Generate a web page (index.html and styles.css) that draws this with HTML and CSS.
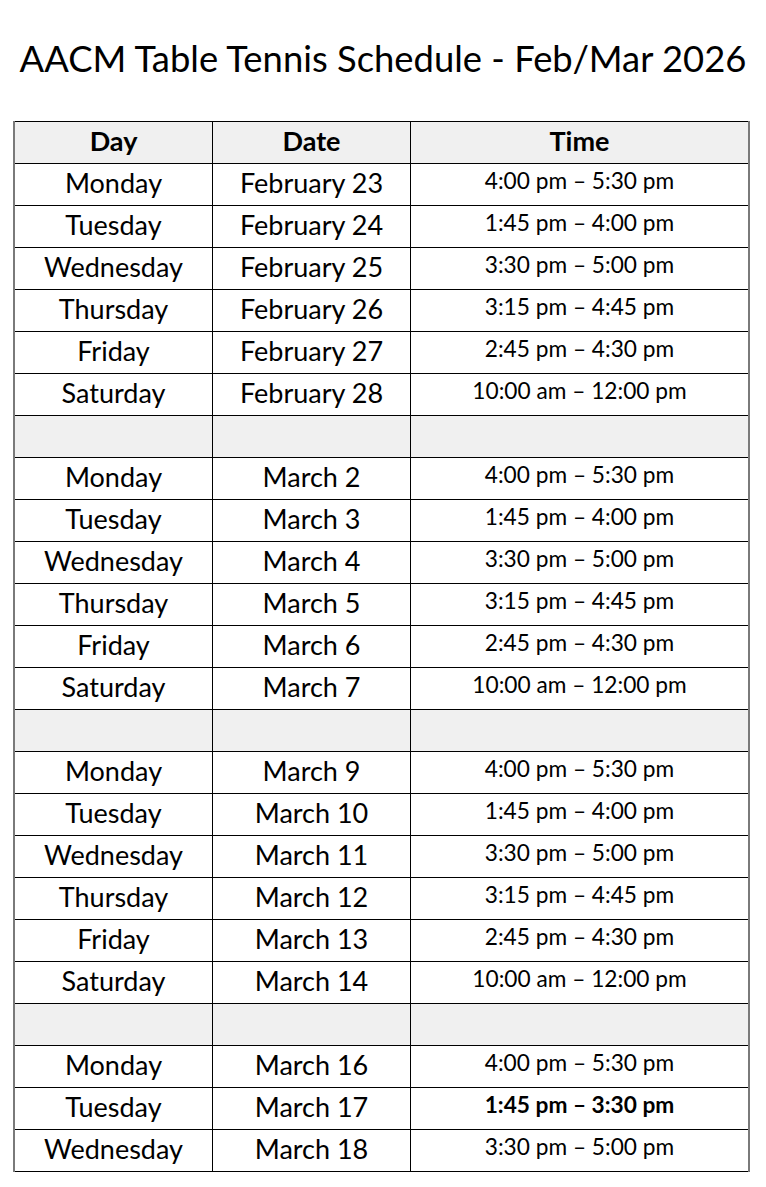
FILE: index.html
```html
<!DOCTYPE html>
<html>
<head>
<meta charset="utf-8">
<link rel="stylesheet" href="styles.css">
</head>
<body>
<h1 class="title">AACM Table Tennis Schedule - Feb/Mar 2026</h1>
<table class="sched">
<thead>
<tr><th class="c-day">Day</th><th class="c-date">Date</th><th class="c-time">Time</th></tr>
</thead>
<tbody>
<tr><td>Monday</td><td>February 23</td><td class="t">4:00 pm – 5:30 pm</td></tr>
<tr><td>Tuesday</td><td>February 24</td><td class="t">1:45 pm – 4:00 pm</td></tr>
<tr><td>Wednesday</td><td>February 25</td><td class="t">3:30 pm – 5:00 pm</td></tr>
<tr><td>Thursday</td><td>February 26</td><td class="t">3:15 pm – 4:45 pm</td></tr>
<tr><td>Friday</td><td>February 27</td><td class="t">2:45 pm – 4:30 pm</td></tr>
<tr><td>Saturday</td><td>February 28</td><td class="t">10:00 am – 12:00 pm</td></tr>
<tr class="gap"><td></td><td></td><td></td></tr>
<tr><td>Monday</td><td>March 2</td><td class="t">4:00 pm – 5:30 pm</td></tr>
<tr><td>Tuesday</td><td>March 3</td><td class="t">1:45 pm – 4:00 pm</td></tr>
<tr><td>Wednesday</td><td>March 4</td><td class="t">3:30 pm – 5:00 pm</td></tr>
<tr><td>Thursday</td><td>March 5</td><td class="t">3:15 pm – 4:45 pm</td></tr>
<tr><td>Friday</td><td>March 6</td><td class="t">2:45 pm – 4:30 pm</td></tr>
<tr><td>Saturday</td><td>March 7</td><td class="t">10:00 am – 12:00 pm</td></tr>
<tr class="gap"><td></td><td></td><td></td></tr>
<tr><td>Monday</td><td>March 9</td><td class="t">4:00 pm – 5:30 pm</td></tr>
<tr><td>Tuesday</td><td>March 10</td><td class="t">1:45 pm – 4:00 pm</td></tr>
<tr><td>Wednesday</td><td>March 11</td><td class="t">3:30 pm – 5:00 pm</td></tr>
<tr><td>Thursday</td><td>March 12</td><td class="t">3:15 pm – 4:45 pm</td></tr>
<tr><td>Friday</td><td>March 13</td><td class="t">2:45 pm – 4:30 pm</td></tr>
<tr><td>Saturday</td><td>March 14</td><td class="t">10:00 am – 12:00 pm</td></tr>
<tr class="gap"><td></td><td></td><td></td></tr>
<tr><td>Monday</td><td>March 16</td><td class="t">4:00 pm – 5:30 pm</td></tr>
<tr><td>Tuesday</td><td>March 17</td><td class="t b">1:45 pm – 3:30 pm</td></tr>
<tr><td>Wednesday</td><td>March 18</td><td class="t">3:30 pm – 5:00 pm</td></tr>
</tbody>
</table>
</body>
</html>
```
FILE: styles.css
```css
html, body {
  margin: 0;
  padding: 0;
  background: #ffffff;
}
body {
  font-family: "Lato", "Open Sans", sans-serif;
  color: #000;
}
.title {
  margin: 0;
  height: 121px;
  box-sizing: border-box;
  padding-top: 35px;
  font-weight: 400;
  font-size: 36.4px;
  line-height: 46px;
  text-align: center;
  white-space: nowrap;
}
.sched {
  margin-left: 13px;
  width: 737px;
  border-collapse: collapse;
  table-layout: fixed;
}
.c-day { width: 197px; }
.c-date { width: 197px; }
.sched th,
.sched td {
  border: 1px solid #000;
  height: 38px;
  padding: 0 0 3px;
  text-align: center;
  vertical-align: middle;
  font-size: 27px;
  line-height: 30px;
  white-space: nowrap;
}
.sched th { height: 37px; padding-bottom: 4px; }
.sched th:first-child, .sched td:first-child { border-left: 2px solid #7a7a7a; }
.sched th:last-child, .sched td:last-child { border-right: 2px solid #7a7a7a; }
.sched th {
  background: #f0f0f0;
  font-weight: 700;
}
.sched .gap td { background: #f0f0f0; }
.sched td.t {
  font-size: 22.7px;
  height: 34px;
  padding-bottom: 7px;
}
.sched td.b { font-weight: 700; }
```
